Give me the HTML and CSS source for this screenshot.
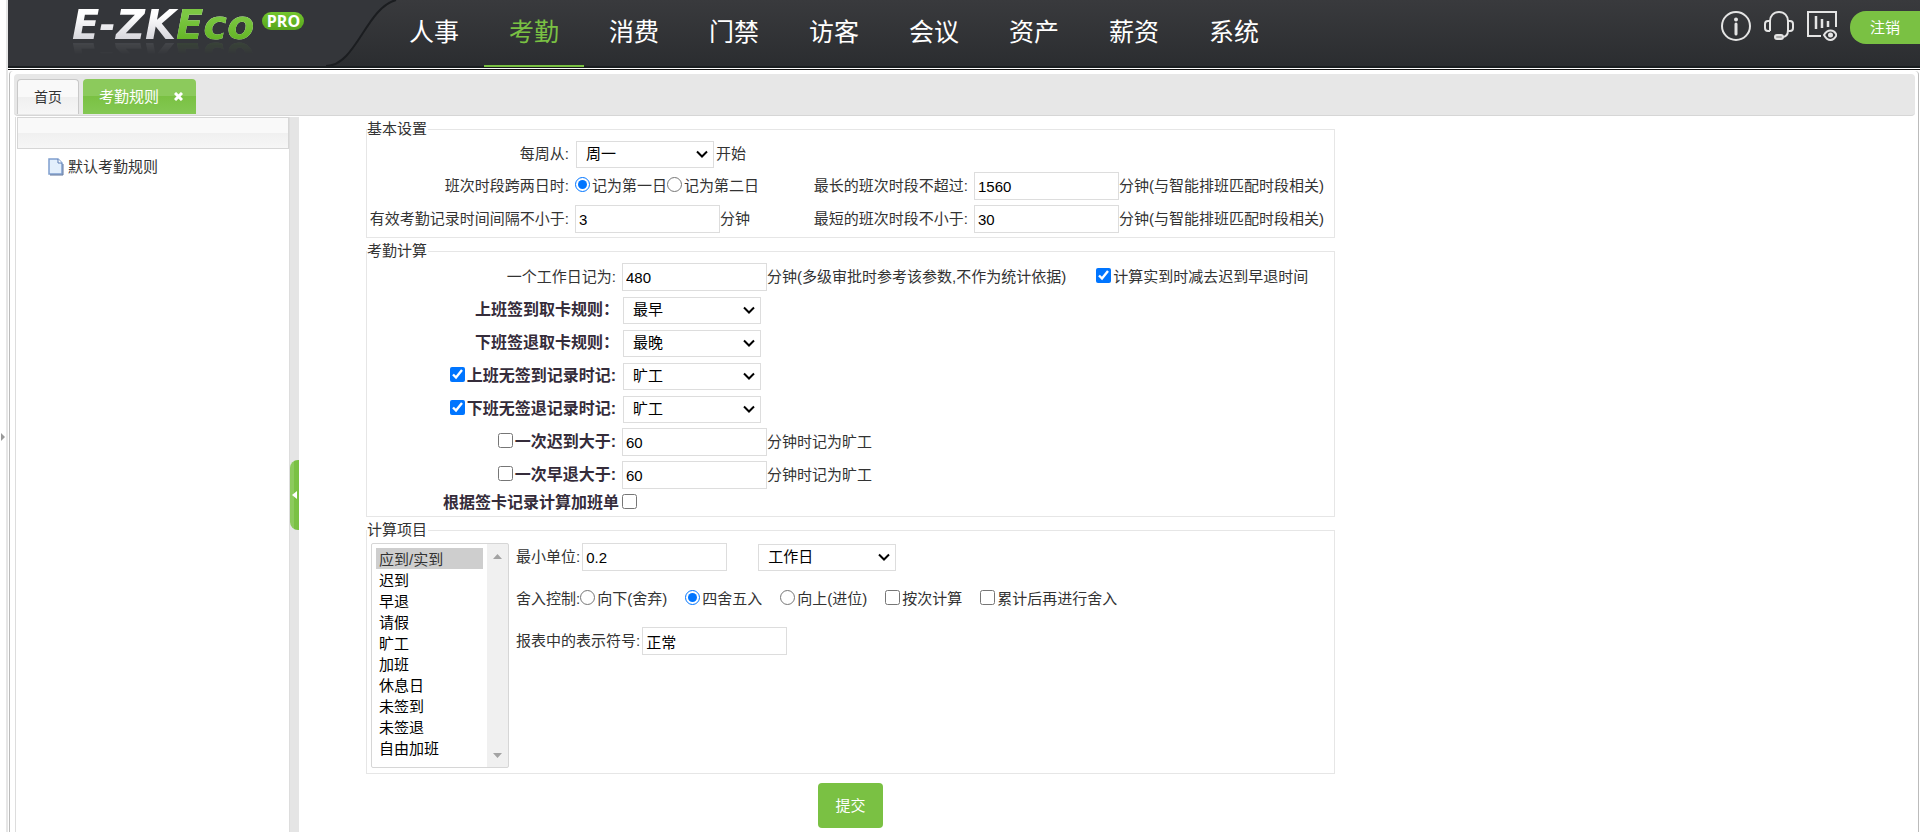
FILE: index.html
```html
<!DOCTYPE html>
<html lang="zh-CN">
<head>
  <meta charset="UTF-8">
  <meta name="viewport" content="width=device-width, initial-scale=1.0">
  <title>考勤规则</title>
  <link rel="stylesheet" href="styles.css">
</head>
<body>
  <div class="page">
    <div class="strip"><span class="strip-arrow"></span></div>
    <div class="frame">
      <header class="header">
        <div class="brand">
          <svg class="brand-curve" width="390" height="66" viewBox="0 0 390 66">
            <path d="M0 0H388C358 8 348 66 318 66H0Z" fill="#34363a"/>
            <path d="M388 0C358 8 348 66 318 66" fill="none" stroke="#1b1d20" stroke-width="2"/>
          </svg>
          <div class="logo">E-ZK<span class="logo-green">Eco</span></div>
          <span class="pro">PRO</span>
        </div>
        <nav class="nav">
          <a href="#">人事</a>
          <a href="#" class="active">考勤</a>
          <a href="#">消费</a>
          <a href="#">门禁</a>
          <a href="#">访客</a>
          <a href="#">会议</a>
          <a href="#">资产</a>
          <a href="#">薪资</a>
          <a href="#">系统</a>
        </nav>
        <div class="tools">
          <a href="#" aria-label="关于">
            <svg width="30" height="30" viewBox="0 0 30 30" fill="none" stroke="#e4e4e4" stroke-width="2">
              <circle cx="15" cy="15" r="14"/>
              <path d="M15 13V23" stroke-width="3" stroke-linecap="round"/>
              <circle cx="15" cy="8.500" r="2" fill="#e4e4e4" stroke="none"/>
            </svg>
          </a>
          <a href="#" aria-label="客服">
            <svg width="30" height="30" viewBox="0 0 30 30" fill="none" stroke="#e4e4e4" stroke-width="2">
              <path d="M6 20V10C6 5 9.500 1 15 1S24 5 24 10V20"/>
              <path d="M6 10H4C2 10 1 11 1 13V17C1 19 2 20 4 20H6M24 10H26C28 10 29 11 29 13V17C29 19 28 20 26 20H24"/>
              <path d="M24 19C24 23 22 26 18 26"/>
              <rect x="11" y="24" width="8" height="4" rx="2" fill="#aaa"/>
            </svg>
          </a>
          <a href="#" aria-label="报表">
            <svg width="30" height="30" viewBox="0 0 30 30" fill="none" stroke="#e4e4e4" stroke-width="2">
              <path d="M14 25H1V1H29V16"/>
              <path d="M9 5V18M15 8V17M21 10V16" stroke-width="2.500"/>
              <path d="M17 24C19 20.500 21 19.500 23.500 19.500S28 20.500 29.500 24C28 27.500 26 29 23.500 29S19 27.500 17 24Z"/>
              <circle cx="23.500" cy="24" r="2.500" fill="#e4e4e4" stroke="none"/>
            </svg>
          </a>
          <button type="button" class="logout">注销</button>
        </div>
      </header>

      <div class="workspace">
        <div class="tabs">
          <a href="#" class="tab">首页</a>
          <div class="tab tab-active">
            <a href="#">考勤规则</a>
            <button type="button" class="tab-close" aria-label="关闭">
              <svg width="9" height="9" viewBox="0 0 9 9"><path d="M1 1L8 8M8 1L1 8" stroke="#fff" stroke-width="3"/></svg>
            </button>
          </div>
        </div>

        <div class="content">
          <aside class="sidebar">
            <div class="sidebar-head"></div>
            <a href="#" class="tree-item">
              <svg width="16" height="18" viewBox="0 0 16 18">
                <path d="M1 1H10L14 5V16H1Z" fill="#e3effc" stroke="#7f9fce" stroke-width="1.500"/>
                <path d="M10 1V5H14" fill="#fff" stroke="#5b7cb4"/>
                <path d="M2 17H15V6" fill="none" stroke="#5f759c"/>
              </svg>
              默认考勤规则
            </a>
          </aside>
          <div class="splitter"><button type="button" class="splitter-handle" aria-label="收起"></button></div>

          <main class="main">
            <form class="form">
              <fieldset>
                <legend>基本设置</legend>
                <div class="rows basic">
                  <label class="label" for="week">每周从:</label>
                  <div class="field">
                    <select id="week" class="select"><option>周一</option></select>
                    <span>开始</span>
                  </div>

                  <span class="label row-start">班次时段跨两日时:</span>
                  <div class="field">
                    <label class="check"><input type="radio" name="cross" checked>记为第一日</label>
                    <label class="check"><input type="radio" name="cross">记为第二日</label>
                  </div>
                  <label class="label" for="max">最长的班次时段不超过:</label>
                  <div class="field">
                    <input type="text" id="max" class="text" value="1560">
                    <span>分钟(与智能排班匹配时段相关)</span>
                  </div>

                  <label class="label row-start" for="interval">有效考勤记录时间间隔不小于:</label>
                  <div class="field">
                    <input type="text" id="interval" class="text" value="3">
                    <span>分钟</span>
                  </div>
                  <label class="label" for="min">最短的班次时段不小于:</label>
                  <div class="field">
                    <input type="text" id="min" class="text" value="30">
                    <span>分钟(与智能排班匹配时段相关)</span>
                  </div>
                </div>
              </fieldset>

              <fieldset>
                <legend>考勤计算</legend>
                <div class="rows calc">
                  <label class="label" for="workday">一个工作日记为:</label>
                  <div class="field">
                    <input type="text" id="workday" class="text" value="480">
                    <span>分钟(多级审批时参考该参数,不作为统计依据)</span>
                    <label class="check minus"><input type="checkbox" checked>计算实到时减去迟到早退时间</label>
                  </div>

                  <label class="label bold flush" for="in-rule">上班签到取卡规则：</label>
                  <div class="field"><select id="in-rule" class="select"><option>最早</option></select></div>

                  <label class="label bold flush" for="out-rule">下班签退取卡规则：</label>
                  <div class="field"><select id="out-rule" class="select"><option>最晚</option></select></div>

                  <label class="label bold check"><input type="checkbox" checked>上班无签到记录时记:</label>
                  <div class="field"><select class="select" aria-label="上班无签到记录时记"><option>旷工</option></select></div>

                  <label class="label bold check"><input type="checkbox" checked>下班无签退记录时记:</label>
                  <div class="field"><select class="select" aria-label="下班无签退记录时记"><option>旷工</option></select></div>

                  <label class="label bold check"><input type="checkbox">一次迟到大于:</label>
                  <div class="field">
                    <input type="text" class="text" value="60" aria-label="一次迟到大于">
                    <span>分钟时记为旷工</span>
                  </div>

                  <label class="label bold check"><input type="checkbox">一次早退大于:</label>
                  <div class="field">
                    <input type="text" class="text" value="60" aria-label="一次早退大于">
                    <span>分钟时记为旷工</span>
                  </div>

                  <label class="label bold flush" for="overtime">根据签卡记录计算加班单</label>
                  <div class="check"><input type="checkbox" id="overtime"></div>
                </div>
              </fieldset>

              <fieldset>
                <legend>计算项目</legend>
                <div class="items">
                  <select class="list" size="10" aria-label="计算项目">
                    <option selected>应到/实到</option>
                    <option>迟到</option>
                    <option>早退</option>
                    <option>请假</option>
                    <option>旷工</option>
                    <option>加班</option>
                    <option>休息日</option>
                    <option>未签到</option>
                    <option>未签退</option>
                    <option>自由加班</option>
                  </select>
                  <div class="item-form">
                    <div class="field">
                      <label for="unit">最小单位:</label>
                      <input type="text" id="unit" class="text" value="0.2">
                      <select class="select unit-select" aria-label="单位"><option>工作日</option></select>
                    </div>
                    <div class="field">
                      <span>舍入控制:</span>
                      <div class="rounding">
                        <label class="check"><input type="radio" name="round">向下(舍弃)</label>
                        <label class="check"><input type="radio" name="round" checked>四舍五入</label>
                        <label class="check"><input type="radio" name="round">向上(进位)</label>
                        <label class="check"><input type="checkbox">按次计算</label>
                        <label class="check"><input type="checkbox">累计后再进行舍入</label>
                      </div>
                    </div>
                    <div class="field">
                      <label for="symbol">报表中的表示符号:</label>
                      <input type="text" id="symbol" class="text" value="正常">
                    </div>
                  </div>
                </div>
              </fieldset>

              <button type="submit" class="submit">提交</button>
            </form>
          </main>
        </div>
      </div>
    </div>
  </div>
</body>
</html>
```
FILE: styles.css
```css
* {
  box-sizing: border-box;
}

body {
  margin: 0;
  font-family: "Liberation Sans", "Noto Sans CJK SC", sans-serif;
  font-size: 15px;
  line-height: 18px;
  color: #333;
  background: #fff;
}

a {
  color: inherit;
  text-decoration: none;
}

button,
input,
select {
  font: inherit;
}

button {
  border: 0;
  padding: 0;
  cursor: pointer;
}

.page {
  display: flex;
  min-height: 100vh;
}

.strip {
  width: 8px;
  border-right: 2px solid #e6e6e6;
  position: relative;
}

.strip-arrow {
  position: absolute;
  left: 1px;
  top: 52%;
  border: 4px solid transparent;
  border-left-color: #999;
  border-right: 0;
}

.frame {
  flex: 1;
  display: flex;
  flex-direction: column;
}

/* header */
.header {
  display: flex;
  height: 68px;
  background: linear-gradient(#393a3d, #2b2d30);
  border-bottom: 2px solid #1a1e20;
  box-shadow: 0 1px #fff, 0 2px #111;
}

.brand {
  position: relative;
  width: 376px;
  padding-left: 64px;
  display: flex;
  align-items: flex-start;
}

.brand-curve {
  position: absolute;
  left: 0;
  top: 0;
}

.logo {
  position: relative;
  font: italic bold 40px/50px "DejaVu Sans", sans-serif;
  background: linear-gradient(#fff 30%, #c4c4cc);
  -webkit-background-clip: text;
  color: transparent;
  -webkit-box-reflect: below -18px linear-gradient(transparent 55%, rgba(0, 0, 0, 0.2));
}

.logo-green {
  background: linear-gradient(#7cc843 30%, #5cae1c);
  -webkit-background-clip: text;
}

.pro {
  position: relative;
  margin: 12px 0 0 8px;
  width: 42px;
  border-radius: 9px;
  background: linear-gradient(#74c62e, #55a51c);
  color: #fff;
  font: bold 16px/18px "Open Sans", sans-serif;
  text-align: center;
}

.nav {
  display: flex;
  flex: 1;
}

.nav a {
  position: relative;
  width: 100px;
  color: #fff;
  font-size: 25px;
  line-height: 64px;
  text-align: center;
}

.nav .active {
  color: #7ac143;
}

.nav .active::after {
  content: "";
  position: absolute;
  left: 0;
  right: 0;
  bottom: -1px;
  height: 2px;
  background: #7ac143;
}

.tools {
  display: flex;
  align-items: flex-start;
  gap: 13px;
  padding-top: 11px;
}

.tools svg {
  display: block;
}

.logout {
  width: 70px;
  height: 33px;
  border-radius: 16px 0 0 16px;
  background: #7ac143;
  color: #fff;
}

/* tabs */
.workspace {
  flex: 1;
  display: flex;
  flex-direction: column;
  margin: 3px 1px 0;
  padding: 3px 3px 0 4px;
  border: solid #bbb;
  border-width: 0 1px;
  border-radius: 4px 4px 0 0;
}

.tabs {
  display: flex;
  align-items: flex-end;
  gap: 4px;
  height: 42px;
  padding: 0 3px 1px;
  background: #e7e7e7;
  border-bottom: 1px solid #d6d6d6;
  border-radius: 4px;
}

.tab {
  display: flex;
  align-items: center;
  height: 35px;
  padding: 0 16px;
  border: 1px solid #c8c8c8;
  border-bottom: 0;
  border-radius: 4px 4px 0 0;
  background: linear-gradient(#f9f9f9 50%, #efefef 50%, #f6f6f6);
  font-size: 14px;
}

.tab-active {
  gap: 15px;
  padding: 0 13px 0 16px;
  border: 0;
  background: linear-gradient(#8cca5c 50%, #7ac143 50%, #84c853);
  color: #fff;
  font-size: 15px;
}

.tab-close {
  background: none;
  line-height: 0;
}

.content {
  flex: 1;
  display: flex;
  margin: 1px 0 0 1px;
  border-left: 1px solid #ddd;
}

.sidebar {
  width: 274px;
  padding-left: 1px;
  border-right: 1px solid #ddd;
}

.sidebar-head {
  height: 32px;
  border: 1px solid #d6d6d6;
  background: linear-gradient(#f9f9f9 50%, #f0f0f0 50%, #f6f6f6);
}

.tree-item {
  display: flex;
  align-items: center;
  gap: 4px;
  padding: 9px 0 0 31px;
}

.splitter {
  position: relative;
  width: 9px;
  background: #e5e5e5;
}

.splitter-handle {
  position: absolute;
  top: 48%;
  left: 0;
  width: 9px;
  height: 70px;
  border-radius: 8px 0 0 8px;
  background: linear-gradient(90deg, #8cca5c 50%, #7ac143 50%);
}

.splitter-handle::after {
  content: "";
  position: absolute;
  left: 2px;
  top: 31px;
  border: 4px solid transparent;
  border-right: 5px solid #fff;
  border-left: 0;
}

/* form */
.main {
  flex: 1;
  padding: 3px 16px 3px 67px;
}

.form {
  max-width: 969px;
}

fieldset {
  margin: 0 0 4px;
  padding: 0;
  border: 1px solid #e6e6e6;
}

legend {
  padding: 0 1px 0 0;
}

.rows {
  display: grid;
  column-gap: 3px;
  row-gap: 5px;
}

.basic {
  grid-template: 26px 28px 28px / 205px 234px 159px auto;
  padding: 3px 0 4px;
}

.calc {
  grid-template: repeat(7, 28px) 18px / 252px auto;
  padding: 3px 0 4px;
}

.row-start {
  grid-column: 1;
}

.label {
  display: flex;
  align-items: center;
  justify-content: flex-end;
  padding-right: 3px;
  white-space: nowrap;
}

.bold {
  font-size: 16px;
  font-weight: bold;
  color: #352c3a;
}

.flush {
  padding-right: 0;
}

.field {
  display: flex;
  align-items: center;
  height: 100%;
  white-space: nowrap;
}

.check {
  display: flex;
  align-items: center;
  gap: 2px;
}

.check input {
  width: 15px;
  height: 15px;
  margin: 0 0 4px;
}

.minus {
  margin-left: 30px;
}

.text {
  width: 145px;
  height: 28px;
  padding: 0 3px;
  border: 1px solid #ddd;
  color: #000;
}

.select {
  appearance: none;
  width: 138px;
  height: 27px;
  margin: 0 2px 0 1px;
  padding: 0 9px;
  border: 1px solid #ddd;
  border-radius: 0;
  color: #000;
  background: #fff url("data:image/svg+xml,%3Csvg xmlns='http://www.w3.org/2000/svg' width='12' height='8'%3E%3Cpath d='M1 1.500L6 6.500L11 1.500' fill='none' stroke='black' stroke-width='2'/%3E%3C/svg%3E") no-repeat right 5px center;
}

.items {
  display: flex;
  align-items: flex-start;
  gap: 7px;
  padding: 4px 4px 5px;
}

.list {
  width: 138px;
  height: 225px;
  padding: 4px 25px 3px 4px;
  border: 1px solid #d6d6d6;
  border-radius: 2px;
  color: #000;
  scrollbar-width: none;
  background: url("data:image/svg+xml,%3Csvg xmlns='http://www.w3.org/2000/svg' width='21' height='223'%3E%3Cpath d='M0 0H21V223H0Z' fill='%23f0f0f0'/%3E%3Cpath d='M6 15L10.500 10L15 15ZM6 209L10.500 214L15 209Z' fill='%23a3a3a3'/%3E%3C/svg%3E") no-repeat right top;
}

.list option {
  height: 21px;
  min-height: 21px;
  padding: 0 3px;
  line-height: 21px;
}

.list option:checked {
  background: #cecece;
  color: #333;
}

.item-form {
  display: flex;
  flex-direction: column;
  gap: 14px;
}

.item-form .field {
  height: 28px;
}

.item-form .text {
  margin-left: 2px;
}

.unit-select {
  margin-left: 31px;
}

.rounding {
  display: flex;
  gap: 18px;
}

.submit {
  display: block;
  width: 65px;
  height: 45px;
  margin: 9px auto 0;
  border-radius: 4px;
  background: #7ac143;
  color: #fff;
}
```
